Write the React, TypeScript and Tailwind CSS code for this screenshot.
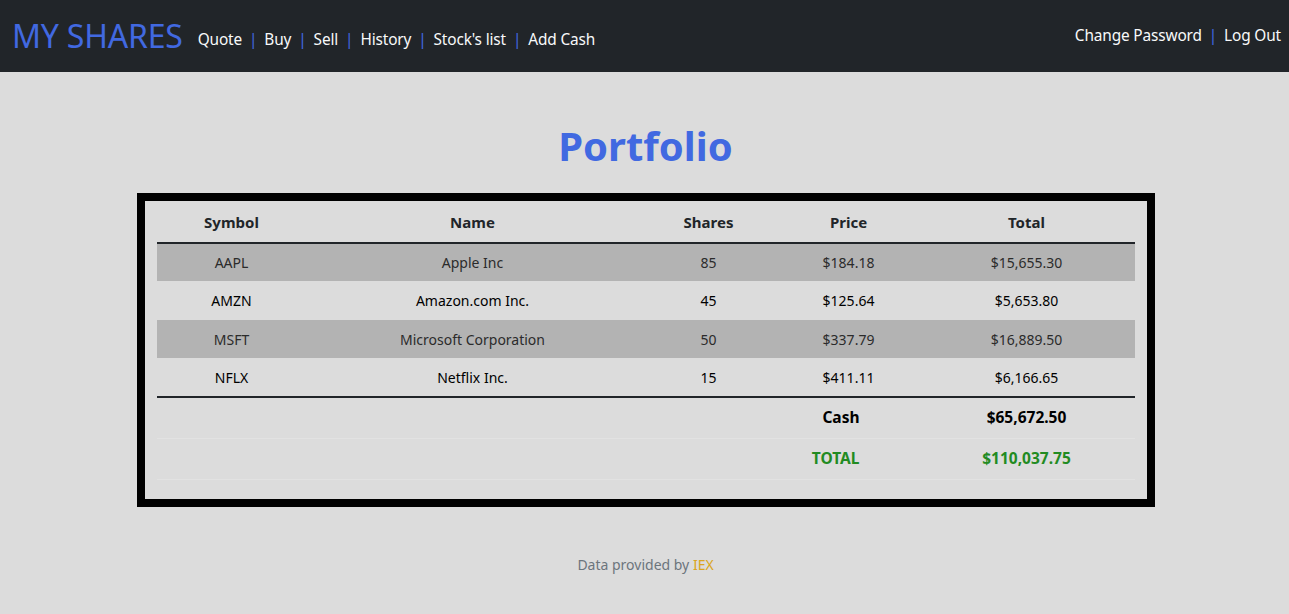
import React from "react";

const rows = [
  { symbol: "AAPL", name: "Apple Inc", shares: 85, price: "$184.18", total: "$15,655.30" },
  { symbol: "AMZN", name: "Amazon.com Inc.", shares: 45, price: "$125.64", total: "$5,653.80" },
  { symbol: "MSFT", name: "Microsoft Corporation", shares: 50, price: "$337.79", total: "$16,889.50" },
  { symbol: "NFLX", name: "Netflix Inc.", shares: 15, price: "$411.11", total: "$6,166.65" },
];

const links = ["Quote", "Buy", "Sell", "History", "Stock's list", "Add Cash"];

function Sep() {
  return <span className="mx-[7px] text-[#4169e1]">|</span>;
}

export default function App() {
  return (
    <div className="min-h-[614px] bg-[#dcdcdc] font-['Noto_Sans',sans-serif] text-[#212529]">
      <nav className="flex h-[72px] items-center justify-between bg-[#212529] pl-[12px] pr-[8px]">
        <div className="flex items-center">
          <span className="text-[32px] leading-none tracking-[-0.2px] text-[#4169e1]">MY SHARES</span>
          <div className="ml-[15px] mt-[8px] flex items-center text-[15.4px] tracking-[-0.15px] text-[#f8f9fa]">
            {links.map((l, i) => (
              <React.Fragment key={l}>
                {i > 0 ? <Sep /> : null}
                <span>{l}</span>
              </React.Fragment>
            ))}
          </div>
        </div>
        <div className="flex items-center text-[15.4px] tracking-[-0.15px] text-[#f8f9fa]">
          <span>Change Password</span>
          <Sep />
          <span>Log Out</span>
        </div>
      </nav>

      <main className="flex flex-col items-center pl-[2px]">
        <h1 className="mt-[54px] text-[40px] font-bold leading-none text-[#4169e1]">Portfolio</h1>
        <div className="mt-[27px] w-[1018px] border-[8px] border-black px-[12px] pb-[19px] pt-[2px]">
          <table className="w-full table-fixed border-collapse text-center">
            <colgroup>
              <col className="w-[150px]" />
              <col className="w-[332px]" />
              <col className="w-[140px]" />
              <col className="w-[140px]" />
              <col className="w-[216px]" />
            </colgroup>
            <thead>
              <tr className="h-[40px] border-b-2 border-[#212529] text-[15px] font-bold">
                <th>Symbol</th>
                <th>Name</th>
                <th>Shares</th>
                <th>Price</th>
                <th>Total</th>
              </tr>
            </thead>
            <tbody className="text-[14px]">
              {rows.map((r, i) => (
                <tr
                  key={r.symbol}
                  className={i % 2 === 0 ? "h-[38px] bg-[#b3b3b3] text-[#2b2b2b]" : "h-[39px] text-black"}
                >
                  <td>{r.symbol}</td>
                  <td>{r.name}</td>
                  <td>{r.shares}</td>
                  <td>{r.price}</td>
                  <td>{r.total}</td>
                </tr>
              ))}
            </tbody>
            <tfoot className="border-t-2 border-[#212529] text-[15.5px] font-bold">
              <tr className="h-[41px] border-b border-[#e2e2e2] text-black">
                <td colSpan={3}></td>
                <td className="pr-[59px] text-right">Cash</td>
                <td>$65,672.50</td>
              </tr>
              <tr className="h-[41px] border-b border-[#e2e2e2] text-[#228b22]">
                <td colSpan={3}></td>
                <td className="pr-[59px] text-right">TOTAL</td>
                <td>$110,037.75</td>
              </tr>
            </tfoot>
          </table>
        </div>
        <p className="mt-[47px] text-[14px] text-[#6c757d]">
          Data provided by <span className="text-[#daa520]">IEX</span>
        </p>
      </main>
    </div>
  );
}
